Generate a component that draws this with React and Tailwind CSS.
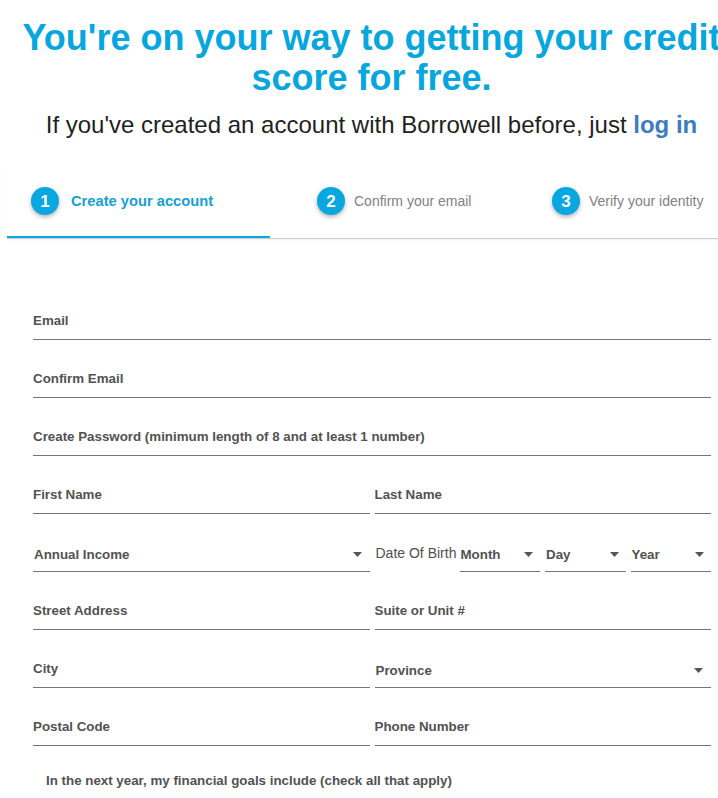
import React from 'react';

const steps = [
  { n: 1, label: 'Create your account', active: true, cls: 'w-[263px] pl-[24px]' },
  { n: 2, label: 'Confirm your email', active: false, cls: 'w-[263px] pl-[47px]' },
  { n: 3, label: 'Verify your identity', active: false, cls: 'flex-1 pl-[19px]' },
];

const Arrow = () => (
  <svg width="9" height="5" viewBox="0 0 9 5" className="shrink-0">
    <path d="M0 0h9L4.5 5z" fill="#555" />
  </svg>
);

const Input = ({ label }) => (
  <div className="h-[58px] flex items-end pb-[10px] border-b border-[#757575]">
    <span className="text-[13.33px] leading-[16px] font-bold text-[#525252]">{label}</span>
  </div>
);

const Select = ({ label, pr = 'pr-[8px]' }) => (
  <div className={`h-[58px] flex items-end justify-between pb-[8px] pl-[1px] border-b border-[#757575] ${pr}`}>
    <span className="text-[13.33px] leading-[16px] font-bold text-[#525252]">{label}</span>
    <span className="mb-[6px]">
      <Arrow />
    </span>
  </div>
);

export default function App() {
  return (
    <div className="w-[718px] h-[798px] overflow-hidden bg-white font-['Liberation_Sans',Arial,sans-serif]">
      <div className="w-[743px]">
        {/* Heading */}
        <h1 className="pt-[18px] text-center text-[36px] leading-[40px] font-bold text-[#06a6de]">
          You're on your way to getting your credit score for free.
        </h1>
        <p className="mt-[12px] text-center text-[24px] leading-[30px] text-[#1f1f1f]">
          If you've created an account with Borrowell before, just{' '}
          <span className="font-bold text-[#3b7cc2]">log in</span>
        </p>

        {/* Steps */}
        <div className="mx-[7px] mt-[31px] flex border-b border-[#cfcfcf] shadow-[0_1px_2px_rgba(0,0,0,0.06)]">
          {steps.map((s) => (
            <div
              key={s.n}
              className={`h-[67px] pt-[16px] ${s.cls} ${s.active ? 'border-b-2 border-[#0aa6de]' : ''}`}
            >
              <div className="flex items-center">
                <div className="w-[28px] h-[28px] rounded-full bg-[#09a7df] shadow-[0_2px_4px_rgba(0,0,0,0.3)] flex items-center justify-center text-white font-bold text-[17px] leading-none">
                  {s.n}
                </div>
                {s.active ? (
                  <span className="ml-[12px] text-[14.7px] font-bold text-[#159fd8]">{s.label}</span>
                ) : (
                  <span className="ml-[9px] text-[14px] text-[#828282]">{s.label}</span>
                )}
              </div>
            </div>
          ))}
        </div>

        {/* Form */}
        <div className="pl-[33px] pr-[32px] mt-[43px]">
          <Input label="Email" />
          <Input label="Confirm Email" />
          <Input label="Create Password (minimum length of 8 and at least 1 number)" />
          <div className="grid grid-cols-2 gap-x-[5px]">
            <Input label="First Name" />
            <Input label="Last Name" />
            <Select label="Annual Income" />
            <div className="h-[58px] flex items-end">
              <div className="w-[85px] pb-[11px] pl-[1px] text-[14px] leading-[16px] text-[#4f4f4f]">
                Date Of Birth
              </div>
              <div className="flex-1 grid grid-cols-3 gap-x-[5px]">
                <Select label="Month" pr="pr-[7px]" />
                <Select label="Day" pr="pr-[7px]" />
                <Select label="Year" pr="pr-[7px]" />
              </div>
            </div>
            <Input label="Street Address" />
            <Input label="Suite or Unit #" />
            <Input label="City" />
            <Select label="Province" />
            <Input label="Postal Code" />
            <Input label="Phone Number" />
          </div>
          <p className="mt-[27px] ml-[13px] text-[13.33px] leading-[16px] font-bold text-[#525252]">
            In the next year, my financial goals include (check all that apply)
          </p>
        </div>
      </div>
    </div>
  );
}
